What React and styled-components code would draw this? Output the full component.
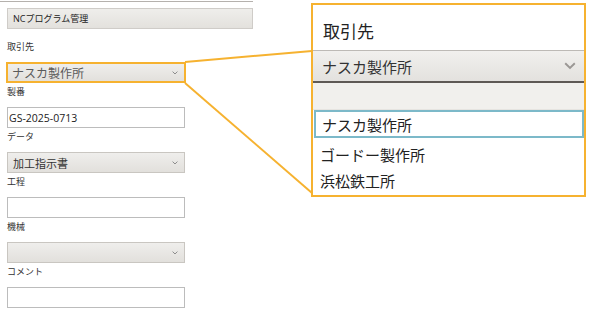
import React from "react"
import styled, { createGlobalStyle } from "styled-components"

const GlobalStyle = createGlobalStyle`
  body {
    margin: 0;
    background: #ffffff;
    font-family: "Open Sans", "Noto Sans CJK JP", sans-serif;
    color: #333;
  }
`

const ORANGE = "#f6b230"

const Chevron = ({ size = 6, color = "#888" }) => (
  <svg width={size} height={size * 0.6} viewBox="0 0 10 6">
    <path d="M1 1 L5 5 L9 1" fill="none" stroke={color} strokeWidth="1.6" />
  </svg>
)

const fields = [
  { label: "取引先", kind: "select", value: "ナスカ製作所", focus: true },
  { label: "製番", kind: "input", value: "GS-2025-0713" },
  { label: "データ", kind: "select", value: "加工指示書" },
  { label: "工程", kind: "input", value: "" },
  { label: "機械", kind: "select", value: "" },
  { label: "コメント", kind: "input", value: "" },
]

const options = ["ゴードー製作所", "浜松鉄工所"]

const App = () => {
  return (
    <>
      <GlobalStyle />
      <StyledPage>
        <Form>
          <TopRule />
          <Header>NCプログラム管理</Header>
          {fields.map((f, i) => (
            <React.Fragment key={f.label}>
              <Label $first={i === 0}>{f.label}</Label>
              {f.kind === "select" ? (
                <Select $focus={f.focus}>
                  <SelectText $big={f.focus}>{f.value}</SelectText>
                  <Chevron />
                </Select>
              ) : (
                <Input>{f.value}</Input>
              )}
            </React.Fragment>
          ))}
        </Form>

        <Callout>
          <CalloutTitle>取引先</CalloutTitle>
          <BigSelect>
            <span>ナスカ製作所</span>
            <Chevron size={12} color="#9a9794" />
          </BigSelect>
          <SearchBox />
          <Option $active>ナスカ製作所</Option>
          <OptionList>
            {options.map((o) => (
              <Option key={o}>{o}</Option>
            ))}
          </OptionList>
        </Callout>

        <Connector width="600" height="329">
          <line x1="185" y1="62" x2="312" y2="51" stroke={ORANGE} strokeWidth="2" />
          <line x1="185" y1="83" x2="312" y2="193" stroke={ORANGE} strokeWidth="2" />
        </Connector>
      </StyledPage>
    </>
  )
}

const StyledPage = styled.div`
  position: relative;
  width: 600px;
  height: 329px;
  display: flex;
  align-items: flex-start;
  overflow: hidden;
`

const Form = styled.div`
  width: 311px;
  flex-shrink: 0;
  display: flex;
  flex-direction: column;
  padding-left: 7px;
  box-sizing: border-box;
`

const TopRule = styled.div`
  width: 253px;
  margin-left: -7px;
  margin-top: 1px;
  height: 1px;
  background: #b5b1ad;
`

const Header = styled.div`
  width: 246px;
  height: 21px;
  margin-top: 6px;
  box-sizing: border-box;
  border: 1px solid #cfccc8;
  background: linear-gradient(#efeeeb, #e3e1dd);
  display: flex;
  align-items: center;
  padding-left: 5px;
  font-size: 9px;
  color: #222;
`

const Label = styled.div`
  height: 12px;
  line-height: 12px;
  margin-top: ${(p) => (p.$first ? "12px" : "3px")};
  margin-bottom: 9px;
  font-size: 9px;
  color: #333;
`

const fieldBox = `
  width: 178px;
  height: 21px;
  box-sizing: border-box;
  display: flex;
  align-items: center;
`

const Select = styled.div`
  ${fieldBox}
  justify-content: space-between;
  padding: 0 6px 0 5px;
  background: linear-gradient(#efeeec, #e2e0dc);
  border: 1px solid #c9c6c1;
  ${(p) =>
    p.$focus &&
    `
    border: 2px solid ${ORANGE};
    margin-left: -1px;
    width: 180px;
    padding-left: 4px;
  `}
`

const SelectText = styled.span`
  font-size: ${(p) => (p.$big ? "12px" : "11px")};
  color: ${(p) => (p.$big ? "#5a5a5a" : "#333")};
`

const Input = styled.div`
  ${fieldBox}
  padding-left: 1px;
  background: #fff;
  border: 1px solid #bcbcbc;
  font-size: 10.5px;
  color: #222;
`

const Callout = styled.div`
  margin-top: 3px;
  width: 275px;
  height: 194px;
  box-sizing: border-box;
  border: 2px solid ${ORANGE};
  background: #fff;
  display: flex;
  flex-direction: column;
`

const CalloutTitle = styled.div`
  height: 45px;
  box-sizing: border-box;
  padding: 6px 0 0 10px;
  display: flex;
  align-items: center;
  font-size: 17px;
  color: #222;
`

const BigSelect = styled.div`
  height: 33px;
  box-sizing: border-box;
  border-top: 1px solid #bdbab6;
  border-bottom: 2px solid #5e5955;
  background: linear-gradient(#f1f0ee, #e3e1de);
  display: flex;
  align-items: center;
  justify-content: space-between;
  padding: 0 8px 0 9px;
  font-size: 15px;
  color: #333;
`

const SearchBox = styled.div`
  height: 27px;
  background: #f1f0ed;
  border-bottom: 1px solid #e6e4e0;
  box-sizing: border-box;
`

const OptionList = styled.div`
  display: flex;
  flex-direction: column;
  padding-top: 3px;
`

const Option = styled.div`
  height: ${(p) => (p.$active ? "28px" : "26px")};
  box-sizing: border-box;
  display: flex;
  align-items: center;
  padding-left: 7px;
  font-size: 15px;
  color: #222;
  ${(p) =>
    p.$active &&
    `
    border: 2px solid #7cb9c9;
    margin-left: 1px;
    padding-left: 6px;
  `}
`

const Connector = styled.svg`
  position: absolute;
  left: 0;
  top: 0;
  pointer-events: none;
`

export default App
